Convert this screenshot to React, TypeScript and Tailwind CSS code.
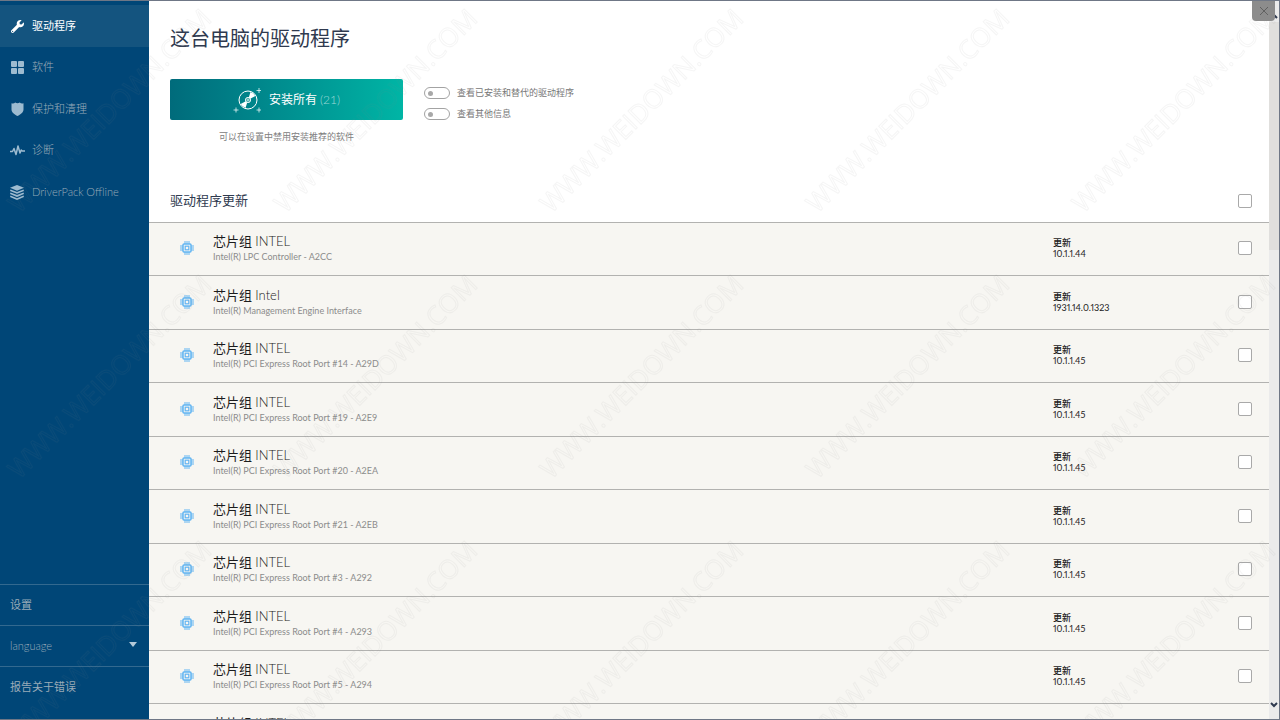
import { useState } from "react";
import { FaWrench } from "react-icons/fa";

type Driver = {
  id: string;
  vendor: string;
  device: string;
  version: string;
};

const DRIVERS: Driver[] = [
  { id: "a2cc", vendor: "INTEL", device: "Intel(R) LPC Controller - A2CC", version: "10.1.1.44" },
  { id: "mei", vendor: "Intel", device: "Intel(R) Management Engine Interface", version: "1931.14.0.1323" },
  { id: "a29d", vendor: "INTEL", device: "Intel(R) PCI Express Root Port #14 - A29D", version: "10.1.1.45" },
  { id: "a2e9", vendor: "INTEL", device: "Intel(R) PCI Express Root Port #19 - A2E9", version: "10.1.1.45" },
  { id: "a2ea", vendor: "INTEL", device: "Intel(R) PCI Express Root Port #20 - A2EA", version: "10.1.1.45" },
  { id: "a2eb", vendor: "INTEL", device: "Intel(R) PCI Express Root Port #21 - A2EB", version: "10.1.1.45" },
  { id: "a292", vendor: "INTEL", device: "Intel(R) PCI Express Root Port #3 - A292", version: "10.1.1.45" },
  { id: "a293", vendor: "INTEL", device: "Intel(R) PCI Express Root Port #4 - A293", version: "10.1.1.45" },
  { id: "a294", vendor: "INTEL", device: "Intel(R) PCI Express Root Port #5 - A294", version: "10.1.1.45" },
  { id: "a296", vendor: "INTEL", device: "Intel(R) PCI Express Root Port #7 - A296", version: "10.1.1.45" },
];

const NAV = [
  { key: "drivers", label: "驱动程序", icon: <FaWrench size={13} /> },
  { key: "software", label: "软件", icon: <GridIcon /> },
  { key: "protect", label: "保护和清理", icon: <ShieldIcon /> },
  { key: "diagnostics", label: "诊断", icon: <PulseIcon /> },
  { key: "offline", label: "DriverPack Offline", icon: <LayersIcon /> },
];

export default function App() {
  const [page, setPage] = useState("drivers");
  const [selected, setSelected] = useState<string[]>([]);

  const allSelected = selected.length === DRIVERS.length;

  function toggle(id: string) {
    setSelected((s) => (s.includes(id) ? s.filter((x) => x !== id) : [...s, id]));
  }

  return (
    <div className="relative flex h-screen overflow-hidden border border-l-0 border-[#6f7786] bg-white font-[Lato,'Noto_Sans_CJK_SC',sans-serif] text-[#2f3a4f]">
      <aside className="flex w-[149px] shrink-0 flex-col bg-[#004677] text-[11px] text-[#9aabb8]">
        <nav className="mt-1">
          {NAV.map((item) => (
            <a
              key={item.key}
              href={`#${item.key}`}
              onClick={() => setPage(item.key)}
              className={`flex h-[42px] items-center gap-2 pl-[10px] even:h-[41px] ${
                page === item.key ? "bg-[#14547f] text-white" : "font-light hover:text-white"
              }`}
            >
              <span
                className={`flex w-[14px] justify-center ${
                  page === item.key ? "text-white" : "text-[#9dbbd0]"
                }`}
              >
                {item.icon}
              </span>
              {item.label}
            </a>
          ))}
        </nav>

        <div className="mt-auto pb-3">
          <a href="#settings" className="flex h-[41px] items-center border-t border-[#33698f] pl-[10px]">
            设置
          </a>
          <div className="relative h-[41px] border-t border-[#33698f]">
            <select
              aria-label="language"
              className="h-full w-full appearance-none bg-transparent pl-[10px] font-light focus:outline-none"
            >
              <option>language</option>
            </select>
            <svg
              width="8"
              height="5"
              viewBox="0 0 8 5"
              className="pointer-events-none absolute top-4 right-3 text-[#b4cad9]"
              fill="currentColor"
            >
              <path d="M0 0h8L4 5z" />
            </svg>
          </div>
          <a href="#report" className="flex h-[41px] items-center border-t border-[#33698f] pl-[10px]">
            报告关于错误
          </a>
        </div>
      </aside>

      <main className="min-w-0 flex-1 overflow-hidden">
        <header className="px-[21px] pt-[22px]">
          <h1 className="text-[20px] leading-[30px]">这台电脑的驱动程序</h1>

          <div className="mt-[26px] flex items-start gap-[21px]">
            <div className="w-[233px]">
              <button className="flex h-[41px] w-full items-center justify-center gap-2 rounded-xs bg-linear-to-r from-[#006b7b] to-[#00b5a5] text-[12px] text-white">
                <DiscIcon />
                <span>
                  安装所有 <span className="font-light text-white/60">(21)</span>
                </span>
              </button>
              <p className="mt-[10px] text-center text-[9px] leading-[14px] text-[#808080]">
                可以在设置中禁用安装推荐的软件
              </p>
            </div>
            <div className="mt-[7px] flex flex-col gap-[7px]">
              <Switch label="查看已安装和替代的驱动程序" />
              <Switch label="查看其他信息" />
            </div>
          </div>
        </header>

        <table className="mt-[35px] w-full table-fixed border-separate border-spacing-0">
          <colgroup>
            <col className="w-[64px]" />
            <col />
            <col className="w-[185px]" />
            <col className="w-[31px]" />
          </colgroup>
          <thead>
            <tr className="h-[43px]">
              <th colSpan={3} className="pl-[21px] text-left text-[13px] font-normal">
                驱动程序更新
              </th>
              <th>
                <Tick
                  label="全选"
                  checked={allSelected}
                  onChange={() => setSelected(allSelected ? [] : DRIVERS.map((d) => d.id))}
                />
              </th>
            </tr>
          </thead>
          <tbody className="bg-[#f7f6f2]">
            {DRIVERS.map((d) => (
              <tr
                key={d.id}
                className="h-[53px] even:h-[54px] [&>td]:border-t [&>td]:border-[#b2b2b0] [&>td]:pb-0.5"
              >
                <td>
                  <ChipIcon />
                </td>
                <td>
                  <div className="text-[13px] leading-[18px] text-[#1c1c1c]">
                    芯片组 <span className="font-light">{d.vendor}</span>
                  </div>
                  <div className="truncate text-[9px] leading-[14px] text-[#8c8c8c]">{d.device}</div>
                </td>
                <td className="text-[9px] leading-[11px] text-[#222222]">
                  <div className="font-medium">更新</div>
                  <div className="proportional-nums">{d.version}</div>
                </td>
                <td>
                  <Tick
                    label={d.device}
                    checked={selected.includes(d.id)}
                    onChange={() => toggle(d.id)}
                  />
                </td>
              </tr>
            ))}
          </tbody>
        </table>
      </main>

      {/* Scrollbar */}
      <div className="flex w-[10px] shrink-0 flex-col bg-[#ebebeb]">
        <div className="flex h-[21px] items-center justify-center pt-2">
          <Chevron className="rotate-180" />
        </div>
        <div className="h-[228px] bg-[#e0dfdd]" />
        <div className="mt-auto flex h-7 items-center justify-center">
          <Chevron />
        </div>
      </div>

      <button
        aria-label="关闭"
        className="absolute top-0 right-1 flex h-5 w-[23px] items-center justify-center rounded-b-sm bg-[#8c8c8c] text-[#5f5f5f]"
      >
        <svg width="10" height="10" viewBox="0 0 10 10" stroke="currentColor" strokeWidth="1">
          <path d="M1 1l8 8M9 1L1 9" />
        </svg>
      </button>

      <Watermark />
    </div>
  );
}

function Switch({ label }: { label: string }) {
  return (
    <label className="flex items-center gap-[7px] text-[9px] leading-[14px] text-[#777777]">
      <input
        type="checkbox"
        role="switch"
        className="flex h-3 w-[26px] appearance-none items-center rounded-full border border-[#a3a3a3] bg-white px-[3px] before:size-[5px] before:rounded-full before:bg-[#a8a8a8] checked:justify-end"
      />
      {label}
    </label>
  );
}

function Tick({
  label,
  checked,
  onChange,
}: {
  label: string;
  checked: boolean;
  onChange: () => void;
}) {
  return (
    <input
      type="checkbox"
      aria-label={label}
      checked={checked}
      onChange={onChange}
      className="block size-[14px] appearance-none rounded-xs border border-[#a9a9a9] bg-white checked:bg-[#00a79d]"
    />
  );
}

function Chevron({ className = "" }: { className?: string }) {
  return (
    <svg
      width="8"
      height="6"
      viewBox="0 0 8 6"
      fill="none"
      stroke="#2f3a4f"
      strokeWidth="2"
      className={className}
    >
      <path d="M1 1l3 3 3-3" />
    </svg>
  );
}

function GridIcon() {
  return (
    <svg width="13" height="13" viewBox="0 0 13 13" fill="currentColor">
      <rect width="6" height="6" rx="1" />
      <rect x="7" width="6" height="6" rx="1" />
      <rect y="7" width="6" height="6" rx="1" />
      <rect x="7" y="7" width="6" height="6" rx="1" />
    </svg>
  );
}

function ShieldIcon() {
  return (
    <svg width="13" height="14" viewBox="0 0 13 14" fill="currentColor">
      <path d="M0.5 1.2C2 1.8 3.2 1.5 4.2 0.4 5.5 1.4 7.5 1.4 8.8 0.4 9.8 1.5 11 1.8 12.5 1.2V7.5C12.5 10.5 9.5 12.6 6.5 14 3.5 12.6 0.5 10.5 0.5 7.5Z" />
    </svg>
  );
}

function PulseIcon() {
  return (
    <svg
      width="15"
      height="11"
      viewBox="0 0 15 11"
      fill="none"
      stroke="currentColor"
      strokeWidth="1.5"
      strokeLinejoin="round"
      className="shrink-0"
    >
      <path d="M0 6.5H2.5L4 3.5L6 9.5L8 1L10 8L11.2 5L12.2 6H15" />
    </svg>
  );
}

function LayersIcon() {
  return (
    <svg width="14" height="15" viewBox="0 0 14 15" fill="currentColor" className="shrink-0">
      <path d="M7 0l7 2.8-7 2.9L0 2.8z" />
      <path d="M0.5 4.4L7 7 13.5 4.4 14 5.9 7 8.8 0 5.9z" />
      <path d="M0.5 7.5L7 10.1 13.5 7.5 14 9 7 11.9 0 9z" />
      <path d="M0.5 10.6L7 13.2 13.5 10.6 14 12.1 7 15 0 12.1z" />
    </svg>
  );
}

function DiscIcon() {
  return (
    <svg width="28" height="26" viewBox="0 0 28 26" fill="none" stroke="#ffffff" className="shrink-0">
      <circle cx="15" cy="13" r="9" strokeWidth="1" />
      <path d="M15 13L17.5 5A8.4 8.4 0 0 1 22.3 9Z" fill="#ffffff" stroke="none" />
      <path d="M15 13L12.5 21A8.4 8.4 0 0 1 7.7 17Z" fill="#ffffff" stroke="none" />
      <circle cx="15" cy="13" r="2.6" fill="#4dabab" strokeWidth="0.9" />
      <circle cx="15" cy="13" r="0.8" fill="#ffffff" stroke="none" />
      <g strokeWidth="0.9" opacity="0.8">
        <path d="M26 1v5M23.5 3.5h5M3 20.5v5M0.5 23h5M26 20.5v5M23.5 23h5" />
      </g>
    </svg>
  );
}

function ChipIcon() {
  return (
    <svg width="14" height="14" viewBox="0 0 14 14" fill="none" stroke="#62b5f2" className="ml-[31px] block">
      <path d="M5 0v3M7 0v3M9 0v3M5 11v3M7 11v3M9 11v3M0 5h3M0 7h3M0 9h3M11 5h3M11 7h3M11 9h3" />
      <rect x="3" y="3" width="8" height="8" rx="1" strokeWidth="1.5" />
      <rect x="5.2" y="5.2" width="3.6" height="3.6" strokeWidth="1.2" />
    </svg>
  );
}

function Watermark() {
  return (
    <svg className="pointer-events-none absolute inset-0 size-full" aria-hidden="true">
      <defs>
        <pattern id="mark" x="-24" y="-24" width="266" height="266" patternUnits="userSpaceOnUse">
          <text
            x="133"
            y="133"
            textAnchor="middle"
            dominantBaseline="central"
            transform="rotate(-45 133 133)"
            fontFamily="Open Sans, sans-serif"
            fontSize="26"
            fill="none"
            stroke="#808080"
            strokeOpacity="0.08"
            strokeWidth="1"
          >
            WWW.WEIDOWN.COM
          </text>
        </pattern>
      </defs>
      <rect width="100%" height="100%" fill="url(#mark)" />
    </svg>
  );
}
